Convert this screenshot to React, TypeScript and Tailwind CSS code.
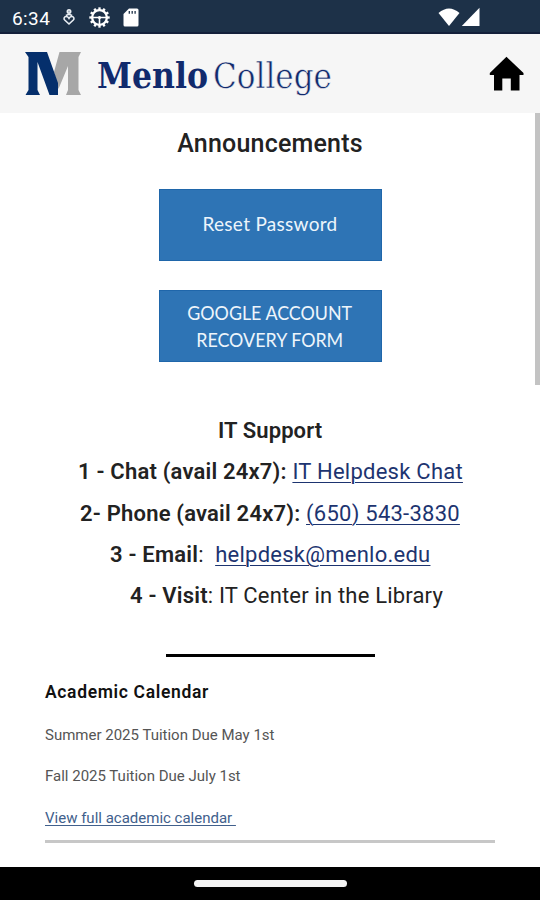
import type { ReactNode } from "react";

const gearTeeth = Array.from({ length: 12 }, (_, i) => i * 30);

function StatusBar() {
  return (
    <div className="flex h-[34px] items-center border-b-2 border-[#14203a] bg-[#1d3148] pt-0.5 text-white">
      <span className="ml-3 w-[50px] pt-0.5 text-[19px] leading-none tracking-[0.4px]">6:34</span>
      <svg className="h-[18px] w-[14px]" viewBox="0 0 14 18" fill="none" stroke="#e9eef3" strokeWidth="1.6">
        <circle cx="7" cy="3.500" r="1.700" fill="#9aa9b8" />
        <path d="M7 16 2.700 12C1.300 10.500 2.300 8.500 4 8.500c1.300 0 2.300.6 3 1.800.7-1.200 1.700-1.800 3-1.800 1.700 0 2.700 2 1.300 3.500z" />
        <path d="M3.800 7.500 7 6.300l3.200 1.200" />
      </svg>
      <svg className="ml-[13px] h-[21px] w-[21px]" viewBox="0 0 20 20" fill="none" stroke="white">
        <circle cx="10" cy="10" r="7" strokeWidth="2.200" />
        {gearTeeth.map((a) => (
          <path key={a} d="M10 .3V3" strokeWidth="2.200" transform={`rotate(${a} 10 10)`} />
        ))}
        <path d="M3 10H17M10 10V17" strokeWidth="1.500" />
        <circle cx="10" cy="10" r="1.500" fill="white" stroke="none" />
      </svg>
      <svg className="ml-[13px] h-[19px] w-4" viewBox="0 0 16 19">
        <path fill="white" d="M6 .5h8q1.500 0 1.500 1.500v15q0 1.500-1.500 1.500H2Q.5 18.500.5 17V6z" />
        <path stroke="#1d3148" strokeWidth="1.300" d="M6.300 3v2.800M9.200 3v2.800M12.100 3v2.800" />
      </svg>
      <svg className="mr-[59px] ml-auto h-5 w-[43px]" viewBox="0 0 43 20" fill="white">
        <path d="M.5 6Q11-3 21.500 6L11 19z" />
        <path d="M41.500.8V19H23.800z" />
      </svg>
    </div>
  );
}

function Header() {
  return (
    <header className="flex h-[79px] items-center justify-between bg-[#f6f6f6]">
      <svg className="h-[79px] w-[350px]" viewBox="0 0 350 79">
        <path fill="#a7a7a7" d="M59.500 18H81L78.500 23V56L81 61H66L68 56V32L58.500 55 54 38z" />
        <path fill="#052f6c" d="M25 18H47L58 49V61H49.500L37.500 28V56L40 61H25.500L28.500 56V23z" />
        <g fontFamily="'DejaVu Serif', serif" fill="#112a6d">
          <text x="97" y="54" fontSize="35" fontWeight="700" textLength="111" lengthAdjust="spacingAndGlyphs">Menlo</text>
          <text x="213" y="54" fontSize="36" stroke="#f6f6f6" strokeWidth="0.6" textLength="119" lengthAdjust="spacingAndGlyphs">College</text>
        </g>
      </svg>
      <svg className="mr-4 h-[35px] w-[35px]" viewBox="0 0 35 35">
        <path d="M17.500.8 34.500 17V19H30.500V34.500H21.800V22.500H13.300V34.500H5V19H.8V17z" />
      </svg>
    </header>
  );
}

function BlueButton({ children }: { children: ReactNode }) {
  return (
    <button className="flex h-[72px] w-[223px] items-center justify-center border border-[#1f66aa] bg-[#2e74b5] font-[Lato,sans-serif] text-[19px] leading-[27px] text-[#edf5fb]">
      {children}
    </button>
  );
}

function Link({ children }: { children: ReactNode }) {
  return <a className="text-[#1d3470] underline decoration-1 underline-offset-[3px]">{children}</a>;
}

export default function App() {
  return (
    <div className="flex h-[900px] w-[540px] flex-col overflow-hidden bg-white font-[Roboto,sans-serif] text-[#222]">
      <StatusBar />
      <Header />
      <div className="flex h-[754px] justify-end">
        <main className="flex w-[535px] flex-col pl-[5px]">
          <h1 className="mt-[13px] h-9 w-[530px] text-center text-[25px] leading-9 font-medium tracking-[0.2px]">Announcements</h1>
          <div className="mt-[27px] flex flex-col items-center gap-[29px]">
            <BlueButton><span className="pb-[3px] tracking-[0.3px]">Reset Password</span></BlueButton>
            <BlueButton><span className="scale-x-94">GOOGLE ACCOUNT<br />RECOVERY FORM</span></BlueButton>
          </div>
          <section className="mt-[48px] text-[22px] leading-[41.3px] tracking-[0.25px] whitespace-pre">
            <h2 className="pl-[213px] font-semibold tracking-[0.1px]">IT Support</h2>
            <p className="pl-[73px]"><b className="font-semibold tracking-[0.2px]">1 - Chat (avail 24x7): </b><Link>IT Helpdesk Chat</Link></p>
            <p className="pl-[75px]"><b className="font-semibold tracking-[0.2px]">2- Phone (avail 24x7): </b><Link>(650) 543-3830</Link></p>
            <p className="pl-[105px]"><b className="font-semibold tracking-[0.2px]">3 - Email</b>:  <Link>helpdesk@menlo.edu</Link></p>
            <p className="pl-[125px] tracking-[0.18px]"><b className="font-semibold tracking-[0.2px]">4 - Visit</b>: IT Center in the Library</p>
          </section>
          <div className="mt-[38px] ml-[161px] h-[3px] w-[209px] bg-black" />
          <section className="mt-[15px] ml-10 w-[450px] border-b-[3px] border-[#c7c7c7] text-[15px] leading-[41.5px] text-[#555]">
            <h2 className="text-[17.5px] font-semibold tracking-[0.65px] text-[#111]">Academic Calendar</h2>
            <p className="pt-px">Summer 2025 Tuition Due May 1st</p>
            <p>Fall 2025 Tuition Due July 1st</p>
            <p className="h-[42px]"><a className="whitespace-pre text-[#41608c] underline underline-offset-2">View full academic calendar </a></p>
          </section>
        </main>
        <div className="h-[272px] w-[5px] bg-[#c3c3c3]" />
      </div>
      <div className="flex h-[33px] items-center justify-center bg-black">
        <div className="h-[7px] w-[153px] rounded-full bg-[#f4f4f4]" />
      </div>
    </div>
  );
}
